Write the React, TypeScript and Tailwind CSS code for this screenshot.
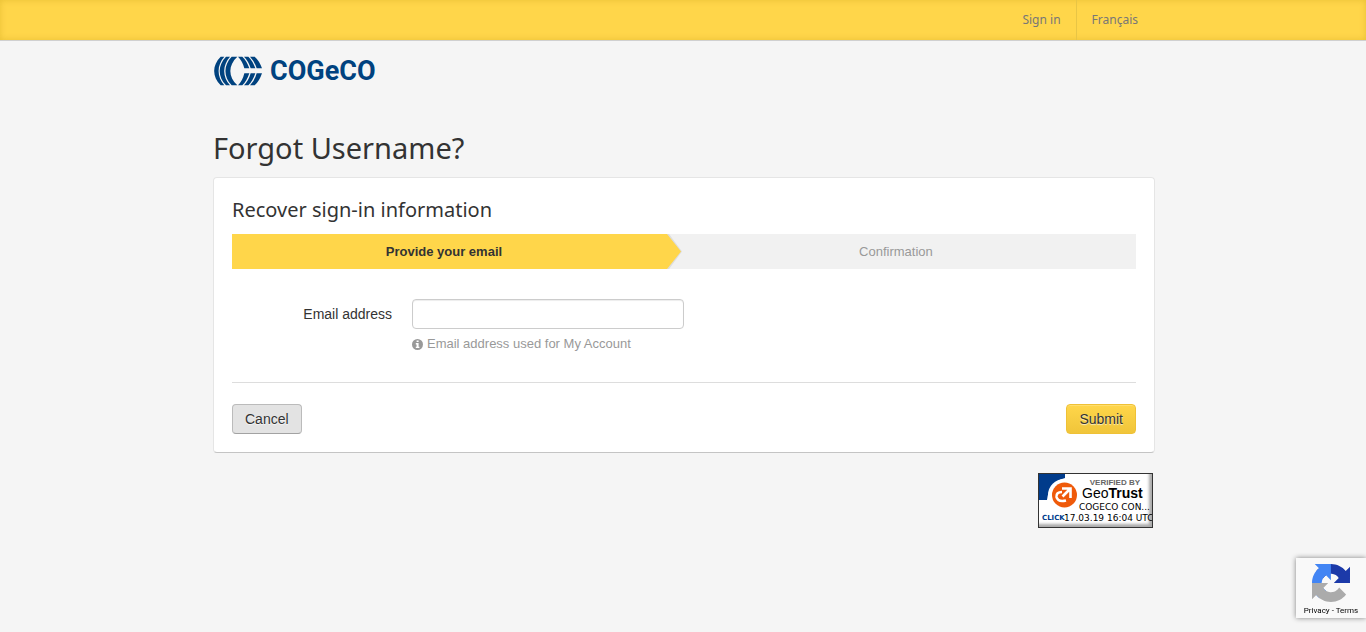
import React from "react";

function CogecoLogo() {
  return (
    <a href="#home" aria-label="Cogeco" className="flex h-[30px] w-fit items-center gap-2 pl-px text-[#00427f]">
      <svg width="48" height="30" viewBox="0 0 144 90" aria-hidden="true">
        <g fill="currentColor">
          <path d="M20 2 H31 C8 28 8 62 31 88 H20 C-6 62 -6 28 20 2Z" />
          <path d="M36 2 H48 C25 28 25 62 48 88 H36 C11 62 11 28 36 2Z" />
          <path d="M53 2 H70 C42 28 42 62 70 88 H53 C28 62 28 28 53 2Z" />
          <path d="M72 2 H85 Q98 14 106 37 H91 Q86 16 72 2Z" />
          <path d="M90 2 H103 Q116 14 124 37 H110 Q104 16 90 2Z" />
          <path d="M108 2 H122 Q136 14 144 37 H128 Q122 16 108 2Z" />
          <path d="M72 88 H85 Q98 76 106 52 H91 Q86 74 72 88Z" />
          <path d="M90 88 H103 Q116 76 124 52 H110 Q104 74 90 88Z" />
          <path d="M108 88 H122 Q136 76 144 52 H128 Q122 74 108 88Z" />
        </g>
      </svg>
      <span className="font-['Roboto',sans-serif] text-[27px] leading-[30px] font-bold">COGeCO</span>
    </a>
  );
}

function InfoIcon() {
  return (
    <svg width="11" height="11" viewBox="0 0 11 11" aria-hidden="true">
      <circle cx="5.5" cy="5.5" r="5.5" fill="#999" />
      <path d="M4.6 1.5h2v1.6h-2zM3.8 4.1h2.8v3.7h.8v1.3H3.8V7.8h.8V5.4h-.8z" fill="#fff" />
    </svg>
  );
}

function GeoTrustSeal() {
  return (
    <a
      href="#seal"
      aria-label="Verified by GeoTrust"
      className="relative block h-[55px] w-[115px] overflow-hidden border border-[#333] bg-white text-black shadow-[inset_-3px_-3px_3px_#aaa]"
    >
      <svg width="113" height="53" viewBox="0 0 113 53" aria-hidden="true" className="absolute inset-0">
        <path d="M0 0H26V4Q10 8 8 26H0Z" fill="#003b8b" />
        <circle cx="25" cy="21" r="16" fill="#fff" />
        <circle cx="25.5" cy="21" r="12.5" fill="#ef5a0a" />
        <path
          d="M23 14.500H31.500V24M31 15L23.500 22.500M23 18Q17 18 17.500 23Q19 28.500 27 26.500"
          fill="none"
          stroke="#fff"
          strokeWidth="2.600"
        />
      </svg>
      <span className="absolute top-1 right-3 font-['Liberation_Sans',sans-serif] text-[8px] leading-[9px] font-bold whitespace-nowrap text-[#666]">
        VERIFIED BY
      </span>
      <span className="absolute top-3 left-[43px] font-['Liberation_Sans',sans-serif] text-[14px] leading-[14px] whitespace-nowrap">
        Geo<b>Trust</b>
      </span>
      <span className="absolute top-7 left-10 font-['DejaVu_Sans',sans-serif] text-[9px] leading-[11px] whitespace-nowrap">
        COGECO CON...
      </span>
      <span className="absolute top-[39px] left-[3px] font-['DejaVu_Sans',sans-serif] text-[7px] leading-[10px] font-bold text-[#003b8b]">
        CLICK
      </span>
      <span className="absolute top-[39px] left-[25px] font-['DejaVu_Sans',sans-serif] text-[9px] leading-[11px] whitespace-nowrap">
        17.03.19 16:04 UTC
      </span>
    </a>
  );
}

function RecaptchaBadge() {
  return (
    <aside className="fixed right-0 bottom-[14px] flex h-[60px] w-[70px] flex-col items-center bg-[#f9f9f9] pt-1.5 shadow-[0_0_5px_gray]">
      <svg width="38" height="38" viewBox="0 0 64 64" aria-hidden="true">
        <path
          fill="#1c3aa9"
          d="M64 31.955a33 33 0 0 0-.033-1.37V4.687l-7.16 7.16C50.948 4.674 42.033.093 32.05.093c-10.4 0-19.622 4.96-25.458 12.64l11.736 11.86a15.55 15.55 0 0 1 4.754-5.334c2.05-1.6 4.952-2.906 8.968-2.906.485 0 .86.057 1.135.163 4.976.393 9.288 3.14 11.828 7.124l-8.307 8.307L64 31.953"
        />
        <path
          fill="#4285f4"
          d="M31.862.094a33 33 0 0 0-1.37.033H4.594l7.16 7.16C4.58 13.147 0 22.06 0 32.046c0 10.4 4.96 19.622 12.64 25.458L24.5 45.768a15.55 15.55 0 0 1-5.334-4.754c-1.6-2.05-2.906-4.952-2.906-8.968 0-.485.057-.86.163-1.135.393-4.976 3.14-9.288 7.124-11.828l8.307 8.307L31.86.095"
        />
        <path
          fill="#ababab"
          d="M0 32.045a33 33 0 0 0 .033 1.37v25.898l7.16-7.16c5.86 7.173 14.774 11.754 24.76 11.754 10.4 0 19.622-4.96 25.458-12.64l-11.736-11.86a15.55 15.55 0 0 1-4.754 5.334c-2.05 1.6-4.952 2.906-8.968 2.906-.485 0-.86-.057-1.135-.163-4.976-.393-9.288-3.14-11.828-7.124l8.307-8.307L0 32.045"
        />
      </svg>
      <p className="mt-0.5 font-['Roboto',sans-serif] text-[8px] leading-[13px] whitespace-nowrap text-black">
        <a href="#privacy">Privacy</a> - <a href="#terms">Terms</a>
      </p>
    </aside>
  );
}

function Steps() {
  return (
    <ol className="mt-2.5 flex h-[35px] bg-[#f1f1f1] text-center text-[13px] leading-[35px]">
      <li aria-current="step" className="relative w-[48%] bg-[#ffd64a] pr-2.5 font-bold text-[#333]">
        Provide your email
        <svg
          width="16"
          height="35"
          viewBox="0 0 16 35"
          aria-hidden="true"
          className="absolute top-0 left-full"
        >
          <path d="M0 0H3L16 17.500L3 35H0Z" fill="#ddd" />
          <path d="M0 0H1L15 17.500L1 35H0Z" fill="#ffd64a" />
        </svg>
      </li>
      <li className="flex-1 pr-2.5 text-[#999]">Confirmation</li>
    </ol>
  );
}

export default function App() {
  return (
    <div className="min-h-screen bg-[#f5f5f5] font-['Liberation_Sans',Arial,sans-serif] text-sm text-[#333]">
      <header className="border-b border-[#d0d0d0] bg-[#ffd64a] pl-0.5 shadow-[inset_0_0_6px_rgba(180,140,0,0.3)]">
        <nav className="mx-auto flex h-10 max-w-[942px] justify-end pr-0.5 font-['Noto_Sans',sans-serif] text-[12px] leading-10 text-[#777]">
          <a href="#sign-in" className="px-[15px]">
            Sign in
          </a>
          <a href="#francais" className="border-l border-[#e8c545] px-[15px]">
            Français
          </a>
        </nav>
      </header>

      <main className="pl-0.5">
        <div className="mx-auto max-w-[942px]">
          <div className="pt-[15px]">
            <CogecoLogo />
          </div>
          <h1 className="mt-[42px] font-['Noto_Sans',sans-serif] text-[29px] leading-10 text-[#333]">
            Forgot Username?
          </h1>

          <section className="mt-[9px] rounded border border-[#e5e5e5] border-b-[#c4c4c4] bg-white p-[18px]">
            <h2 className="font-['Noto_Sans',sans-serif] text-[20px] leading-7 text-[#333]">
              Recover sign-in information
            </h2>
            <Steps />
            <form onSubmit={(event) => event.preventDefault()}>
              <div className="mt-[30px] flex items-start gap-5">
                <label htmlFor="email" className="w-40 text-right leading-[30px]">
                  Email address
                </label>
                <div>
                  <input
                    id="email"
                    type="email"
                    aria-describedby="email-help"
                    className="block h-[30px] w-[272px] rounded border border-[#ccc] bg-white px-1.5 shadow-[inset_0_1px_1px_rgba(0,0,0,0.075)]"
                  />
                  <p
                    id="email-help"
                    className="mt-[5px] flex items-center gap-1 text-[13px] leading-5 text-[#999]"
                  >
                    <InfoIcon />
                    Email address used for My Account
                  </p>
                </div>
              </div>
              <div className="mt-7 flex justify-between border-t border-[#ddd] pt-[21px]">
                <button
                  type="button"
                  className="h-[30px] rounded border border-[#bbb] border-b-[#a2a2a2] bg-[#e3e3e3] px-3 [text-shadow:0_1px_1px_rgba(255,255,255,0.75)]"
                >
                  Cancel
                </button>
                <button
                  type="submit"
                  className="h-[30px] rounded border border-[#efc136] bg-linear-to-b from-[#ffd64a] to-[#f0c53a] px-3 shadow-[inset_0_1px_0_rgba(255,255,255,0.2)] [text-shadow:0_1px_1px_rgba(255,255,255,0.75)]"
                >
                  Submit
                </button>
              </div>
            </form>
          </section>

          <div className="mt-5 flex justify-end pr-0.5">
            <GeoTrustSeal />
          </div>
        </div>
      </main>

      <RecaptchaBadge />
    </div>
  );
}
